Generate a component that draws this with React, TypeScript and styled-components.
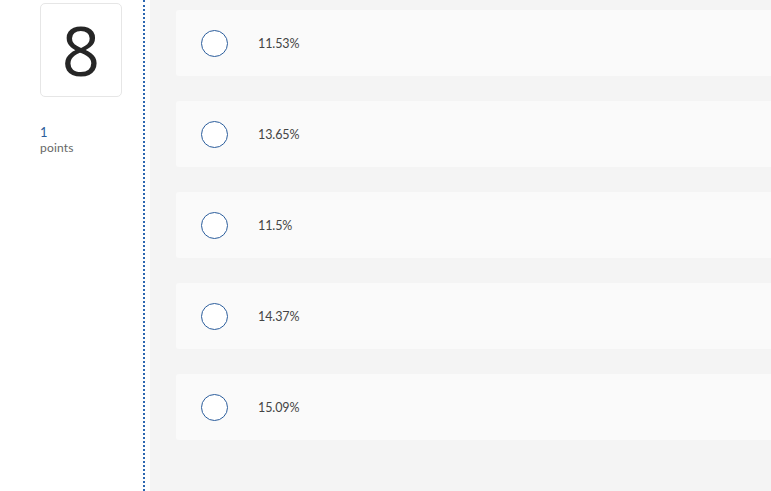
import React from "react";
import styled, { createGlobalStyle } from "styled-components";

const GlobalStyle = createGlobalStyle`
  html, body {
    margin: 0;
    padding: 0;
    background: #ffffff;
    font-family: Lato, "Open Sans", "Liberation Sans", sans-serif;
  }
`;

const Layout = styled.div`
  display: flex;
  min-height: 491px;
  background: #ffffff;
`;

const Sidebar = styled.aside`
  width: 103px;
  flex-shrink: 0;
  padding: 3px 0 0 40px;
  border-right: 2px dotted #2b66b1;
`;

const NumberBox = styled.div`
  width: 80px;
  height: 92px;
  border: 1px solid #e6e6e6;
  border-radius: 5px;
  display: flex;
  align-items: center;
  justify-content: center;
  font-family: "Open Sans", Lato, sans-serif;
  font-size: 67px;
  font-weight: 400;
  color: #262626;
  line-height: 1;
`;

const Points = styled.div`
  margin-top: 28px;
  display: flex;
  flex-direction: column;
`;

const PointValue = styled.span`
  font-size: 13px;
  color: #2b5d9c;
  line-height: 15px;
`;

const PointLabel = styled.span`
  font-size: 12px;
  color: #666;
  line-height: 15px;
  letter-spacing: 0.2px;
`;

const Main = styled.main`
  flex: 1;
  margin-left: 5px;
  background: #f4f4f4;
  padding: 10px 0 0 26px;
  display: flex;
  flex-direction: column;
  gap: 25px;
`;

const Choice = styled.label`
  display: flex;
  align-items: center;
  height: 66px;
  padding-left: 25px;
  gap: 30px;
  background: #fafafa;
  border-radius: 3px 0 0 3px;
  cursor: pointer;
`;

const Radio = styled.span`
  width: 25px;
  height: 25px;
  border-radius: 50%;
  border: 1.5px solid #2b5d9c;
  background: #ffffff;
  flex-shrink: 0;
`;

const ChoiceText = styled.span`
  font-size: 12.5px;
  color: #444;
  letter-spacing: -0.1px;
`;

const answers = ["11.53%", "13.65%", "11.5%", "14.37%", "15.09%"];

const App = () => {
  return (
    <>
      <GlobalStyle />
      <Layout>
        <Sidebar>
          <NumberBox>8</NumberBox>
          <Points>
            <PointValue>1</PointValue>
            <PointLabel>points</PointLabel>
          </Points>
        </Sidebar>
        <Main>
          {answers.map((a) => (
            <Choice key={a}>
              <Radio />
              <ChoiceText>{a}</ChoiceText>
            </Choice>
          ))}
        </Main>
      </Layout>
    </>
  );
};

export default App;
